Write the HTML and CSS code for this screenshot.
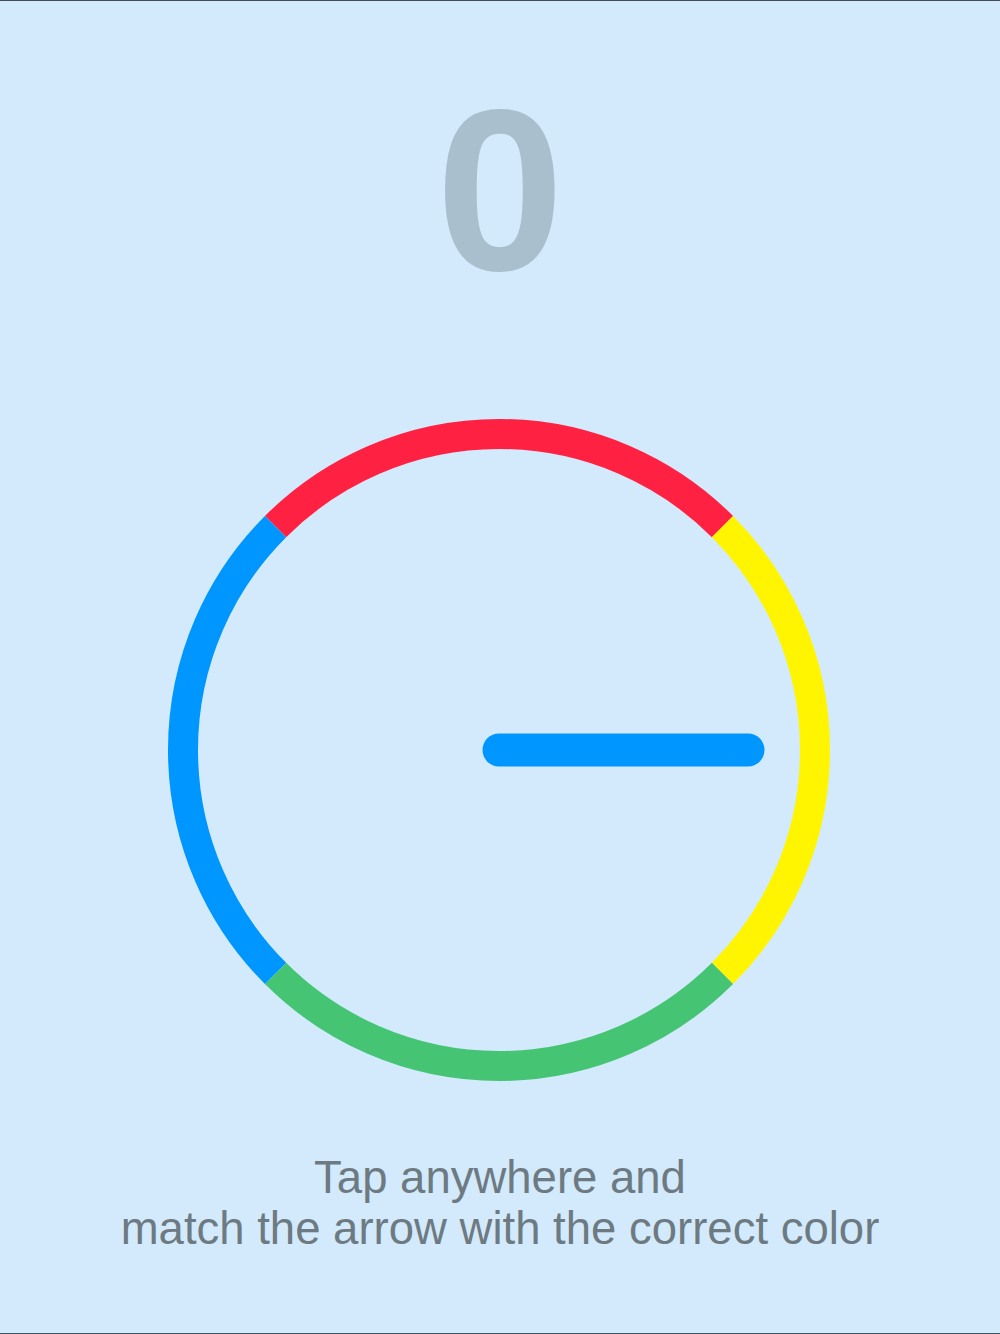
FILE: index.html
```html
<!DOCTYPE html>
<html lang="en">
<head>
<meta charset="utf-8">
<title>Color Match</title>
<link rel="stylesheet" href="styles.css">
</head>
<body>
<main class="screen">
  <div class="score">0</div>
  <svg class="wheel" width="670" height="670" viewBox="0 0 670 670" aria-hidden="true">
    <g fill="none" stroke-width="30" stroke-linecap="butt">
      <path class="seg-red" d="M111.55 111.55 A316 316 0 0 1 558.45 111.55"/>
      <path class="seg-yellow" d="M558.45 111.55 A316 316 0 0 1 558.45 558.45"/>
      <path class="seg-green" d="M558.45 558.45 A316 316 0 0 1 111.55 558.45"/>
      <path class="seg-blue" d="M111.55 558.45 A316 316 0 0 1 111.55 111.55"/>
    </g>
    <line class="arrow" x1="335" y1="335" x2="584" y2="335"/>
  </svg>
  <p class="hint">Tap anywhere and<br>match the arrow with the correct color</p>
</main>
</body>
</html>
```
FILE: styles.css
```css
html, body {
  margin: 0;
  padding: 0;
  background: #d2eafc;
}

.screen {
  box-sizing: border-box;
  width: 1000px;
  height: 1334px;
  background: #d2eafc;
  border-top: 1px solid #434d5a;
  border-bottom: 1px solid #3d5662;
  display: flex;
  flex-direction: column;
  align-items: center;
  overflow: hidden;
}

.score {
  margin-top: 75px;
  font-family: "Liberation Sans", Arial, sans-serif;
  font-weight: 700;
  font-size: 230px;
  line-height: 230px;
  height: 230px;
  color: #a9bfce;
}

.wheel {
  display: block;
  margin-top: 109px;
  margin-right: 2px;
}

.seg-red { stroke: #ff2142; }
.seg-yellow { stroke: #fff500; }
.seg-green { stroke: #45c574; }
.seg-blue { stroke: #0096ff; }

.arrow {
  stroke: #0096ff;
  stroke-width: 33;
  stroke-linecap: round;
}

.hint {
  margin: 67px 0 0;
  font-family: "Liberation Sans", Arial, sans-serif;
  font-size: 45.5px;
  line-height: 51px;
  color: #6e7a82;
  text-align: center;
}
```
